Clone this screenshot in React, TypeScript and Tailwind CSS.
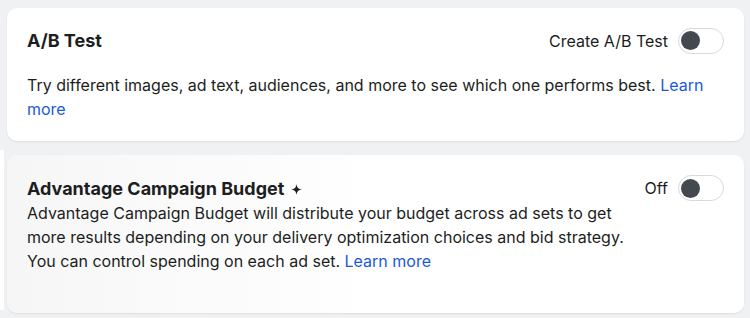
import { useState } from 'react';

function Toggle({ on, onClick }: { on: boolean; onClick: () => void }) {
  return (
    <button
      onClick={onClick}
      className={`w-[46px] h-[26px] rounded-full border border-[#d8dadf] flex items-center px-[2px] ${
        on ? 'justify-end bg-[#1877f2]' : 'justify-start bg-white'
      }`}
    >
      <span className={`w-[19px] h-[19px] rounded-full ${on ? 'bg-white' : 'bg-[#444950]'}`}></span>
    </button>
  );
}

export default function App() {
  const [abTest, setAbTest] = useState(false);
  const [budget, setBudget] = useState(false);

  return (
    <div className="w-[750px] h-[318px] bg-[#f0f1f3] flex font-['Inter',sans-serif] text-[#1c1e21] overflow-hidden">
      <div className="w-[4px] mt-[150px] mb-[8px] bg-white"></div>
      <div className="flex-1 flex flex-col gap-[14px] pt-[8px] pl-[3px] pr-[6px]">
        {/* A/B Test */}
        <section className="h-[133px] bg-white rounded-[10px] shadow-[0_1px_2px_rgba(0,0,0,0.08)] px-[20px] pt-[19px]">
          <div className="flex items-center justify-between">
            <h3 className="text-[18px] font-bold">A/B Test</h3>
            <div className="flex items-center gap-[10px]">
              <span className="text-[16px]">Create A/B Test</span>
              <Toggle on={abTest} onClick={() => setAbTest(!abTest)} />
            </div>
          </div>
          <p className="mt-[19px] text-[16px] leading-[24px]">
            Try different images, ad text, audiences, and more to see which one performs best.{' '}
            <a className="text-[#1a5ad7]">Learn more</a>
          </p>
        </section>

        {/* Advantage Campaign Budget */}
        <section className="h-[158px] bg-gradient-to-r from-[#f6f6f7] via-white to-white rounded-[10px] shadow-[0_1px_2px_rgba(0,0,0,0.08)] pl-[20px] pr-[20px] pt-[20px] flex justify-between">
          <div className="pt-[2px]">
            <h3 className="text-[18px] font-bold leading-[24px] flex items-center gap-[7px]">
              Advantage Campaign Budget
              <svg width="11" height="11" viewBox="0 0 12 12" fill="#1c1e21">
                <path d="M6 0 C6.5 4 8 5.5 12 6 C8 6.5 6.5 8 6 12 C5.5 8 4 6.5 0 6 C4 5.5 5.5 4 6 0 Z" />
              </svg>
            </h3>
            <p className="text-[16px] leading-[24px] w-[612px]">
              Advantage Campaign Budget will distribute your budget across ad sets to get more results depending on
              your delivery optimization choices and bid strategy. You can control spending on each ad set.{' '}
              <a className="text-[#1a5ad7]">Learn more</a>
            </p>
          </div>
          <div className="flex items-start gap-[10px]">
            <span className="text-[16px] leading-[26px]">Off</span>
            <Toggle on={budget} onClick={() => setBudget(!budget)} />
          </div>
        </section>
      </div>
    </div>
  );
}
